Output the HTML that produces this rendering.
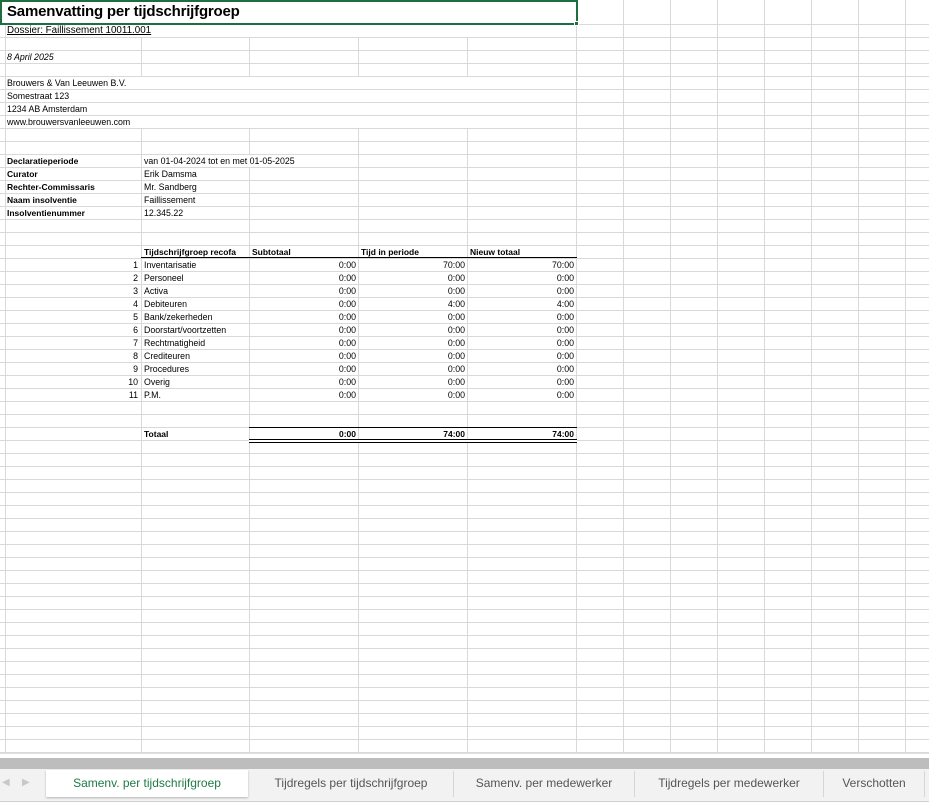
<!DOCTYPE html>
<html><head><meta charset="utf-8"><style>
*{margin:0;padding:0;box-sizing:border-box}
body{width:929px;height:802px;overflow:hidden;background:#fff;font-family:"Liberation Sans",Arial,sans-serif;position:relative;color:#000}
#grid{position:absolute;left:0;top:0;width:929px;height:753px;
background-image:
linear-gradient(to right,transparent 5px,#d9d9d9 5px,#d9d9d9 6px,transparent 6px),
linear-gradient(to right,transparent 141px,#d9d9d9 141px,#d9d9d9 142px,transparent 142px),
linear-gradient(to right,transparent 249px,#d9d9d9 249px,#d9d9d9 250px,transparent 250px),
linear-gradient(to right,transparent 358px,#d9d9d9 358px,#d9d9d9 359px,transparent 359px),
linear-gradient(to right,transparent 467px,#d9d9d9 467px,#d9d9d9 468px,transparent 468px);
}
#h{position:absolute;left:0;top:24px;width:929px;height:729px;background:repeating-linear-gradient(to bottom,#d9d9d9 0,#d9d9d9 1px,transparent 1px,transparent 13px)}
#v2{position:absolute;left:576px;top:0;width:353px;height:753px;background:repeating-linear-gradient(to right,#d9d9d9 0,#d9d9d9 1px,transparent 1px,transparent 47px)}
.w{position:absolute;background:#fff}
.t{position:absolute;font-size:8.8px;line-height:12px;white-space:nowrap}
.b{font-weight:bold}
.r{text-align:right}
</style></head><body>
<div id="grid"></div>
<div id="v2"></div>
<div id="h"></div>
<div class="w" style="left:1px;top:0;width:576px;height:24px"></div>
<div class="w" style="left:6px;top:25px;width:570px;height:12px"></div>
<div class="w" style="left:6px;top:51px;width:134px;height:12px"></div>
<div class="w" style="left:6px;top:77px;width:570px;height:51px"></div>
<div style="position:absolute;left:0;top:89px;width:577px;height:1px;background:#d9d9d9"></div>
<div style="position:absolute;left:0;top:102px;width:577px;height:1px;background:#d9d9d9"></div>
<div style="position:absolute;left:0;top:115px;width:577px;height:1px;background:#d9d9d9"></div>
<div class="w" style="left:142px;top:155px;width:216px;height:12px"></div>
<div style="position:absolute;left:0;top:0;width:578px;height:25px;border:2px solid #1e6e42"></div>
<div style="position:absolute;left:574px;top:21px;width:5px;height:5px;background:#1e6e42;border:1px solid #fff"></div>
<div class="t b" style="left:7px;top:3px;font-size:15px;line-height:18px;letter-spacing:-0.2px">Samenvatting per tijdschrijfgroep</div>
<div class="t" style="left:7px;top:25px;font-size:9.8px;text-decoration:underline">Dossier: Faillissement 10011.001</div>
<div class="t" style="left:7px;top:51px;font-style:italic">8 April 2025</div>
<div class="t" style="left:7px;top:77px">Brouwers &amp; Van Leeuwen B.V.</div>
<div class="t" style="left:7px;top:90px">Somestraat 123</div>
<div class="t" style="left:7px;top:103px">1234 AB Amsterdam</div>
<div class="t" style="left:7px;top:116px">www.brouwersvanleeuwen.com</div>
<div class="t b" style="left:7px;top:155px;font-size:8.5px">Declaratieperiode</div>
<div class="t b" style="left:7px;top:168px;font-size:8.5px">Curator</div>
<div class="t b" style="left:7px;top:181px;font-size:8.5px">Rechter-Commissaris</div>
<div class="t b" style="left:7px;top:194px;font-size:8.5px">Naam insolventie</div>
<div class="t b" style="left:7px;top:207px;font-size:8.5px">Insolventienummer</div>
<div class="t" style="left:144px;top:155px">van 01-04-2024 tot en met 01-05-2025</div>
<div class="t" style="left:144px;top:168px">Erik Damsma</div>
<div class="t" style="left:144px;top:181px">Mr. Sandberg</div>
<div class="t" style="left:144px;top:194px">Faillissement</div>
<div class="t" style="left:144px;top:207px">12.345.22</div>
<div class="t b" style="left:144px;top:246px;font-size:8.5px">Tijdschrijfgroep recofa</div>
<div class="t b" style="left:252px;top:246px;font-size:8.5px">Subtotaal</div>
<div class="t b" style="left:361px;top:246px;font-size:8.5px">Tijd in periode</div>
<div class="t b" style="left:470px;top:246px;font-size:8.5px">Nieuw totaal</div>
<div style="position:absolute;left:141px;top:257px;width:436px;height:1px;background:#000"></div>
<div class="t" style="left:6px;top:259px;width:132px;text-align:right;line-height:13px">1<br>2<br>3<br>4<br>5<br>6<br>7<br>8<br>9<br>10<br>11</div>
<div class="t" style="left:144px;top:259px;line-height:13px">Inventarisatie<br>Personeel<br>Activa<br>Debiteuren<br>Bank/zekerheden<br>Doorstart/voortzetten<br>Rechtmatigheid<br>Crediteuren<br>Procedures<br>Overig<br>P.M.</div>
<div class="t r" style="left:250px;top:259px;width:106px;line-height:13px">0:00<br>0:00<br>0:00<br>0:00<br>0:00<br>0:00<br>0:00<br>0:00<br>0:00<br>0:00<br>0:00</div>
<div class="t r" style="left:359px;top:259px;width:106px;line-height:13px">70:00<br>0:00<br>0:00<br>4:00<br>0:00<br>0:00<br>0:00<br>0:00<br>0:00<br>0:00<br>0:00</div>
<div class="t r" style="left:468px;top:259px;width:106px;line-height:13px">70:00<br>0:00<br>0:00<br>4:00<br>0:00<br>0:00<br>0:00<br>0:00<br>0:00<br>0:00<br>0:00</div>
<div style="position:absolute;left:249px;top:427px;width:328px;height:1px;background:#000"></div>
<div style="position:absolute;left:249px;top:439px;width:328px;height:4px;border-top:1px solid #000;border-bottom:1px solid #000;background:#fff"></div>
<div class="t b" style="left:144px;top:428px;font-size:8.5px">Totaal</div>
<div class="t b r" style="left:250px;top:428px;width:106px;font-size:8.5px">0:00</div>
<div class="t b r" style="left:359px;top:428px;width:106px;font-size:8.5px">74:00</div>
<div class="t b r" style="left:468px;top:428px;width:106px;font-size:8.5px">74:00</div>
<div style="position:absolute;left:0;top:753px;width:929px;height:5px;background:#fff;border-top:1px solid #e0e0e0"></div>
<div style="position:absolute;left:0;top:758px;width:929px;height:11px;background:#bdbdbd"></div>
<div style="position:absolute;left:0;top:769px;width:929px;height:33px;background:#f2f2f2;border-bottom:1px solid #d0d0d0"></div>
<div class="t" style="left:2px;top:777px;font-size:10px;color:#c8c8c8">◀</div>
<div class="t" style="left:22px;top:777px;font-size:10px;color:#c8c8c8">▶</div>
<div style="position:absolute;left:46px;top:770px;width:202px;height:27px;background:#fff;box-shadow:0 1px 2px rgba(0,0,0,.25)"></div>
<div class="t" style="left:46px;top:776px;width:202px;text-align:center;font-size:12px;line-height:14px;color:#1e7a45">Samenv. per tijdschrijfgroep</div>
<div class="t" style="left:249px;top:776px;width:204px;text-align:center;font-size:12px;line-height:14px;color:#555">Tijdregels per tijdschrijfgroep</div>
<div style="position:absolute;left:453px;top:771px;width:1px;height:26px;background:#d6d6d6"></div>
<div class="t" style="left:454px;top:776px;width:180px;text-align:center;font-size:12px;line-height:14px;color:#555">Samenv. per medewerker</div>
<div style="position:absolute;left:634px;top:771px;width:1px;height:26px;background:#d6d6d6"></div>
<div class="t" style="left:635px;top:776px;width:188px;text-align:center;font-size:12px;line-height:14px;color:#555">Tijdregels per medewerker</div>
<div style="position:absolute;left:823px;top:771px;width:1px;height:26px;background:#d6d6d6"></div>
<div class="t" style="left:824px;top:776px;width:100px;text-align:center;font-size:12px;line-height:14px;color:#555">Verschotten</div>
<div style="position:absolute;left:924px;top:771px;width:1px;height:26px;background:#d6d6d6"></div>
</body></html>
